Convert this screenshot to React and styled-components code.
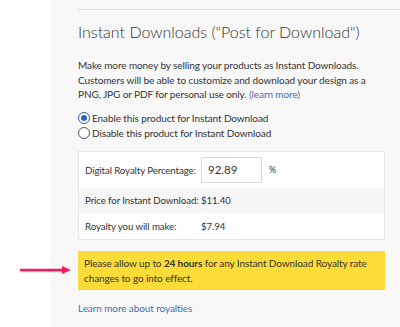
import React, { useState } from "react"
import styled, { createGlobalStyle } from "styled-components"

const GlobalStyle = createGlobalStyle`
  body {
    margin: 0;
    background: #fff;
    font-family: "Lato", "Liberation Sans", sans-serif;
    color: #333;
  }
`

const Page = styled.div`
  display: flex;
  width: 400px;
  height: 327px;
  overflow: hidden;
`

const Gutter = styled.div`
  width: 51px;
  flex: none;
  background: #fff;
`

const Panel = styled.section`
  flex: 1;
  background: #f8f8f8;
  padding: 9px 0 0 27px;
  font-size: 10px;
  letter-spacing: -0.1px;
`

const Divider = styled.hr`
  margin: 0;
  border: 0;
  border-top: 1px solid #dcdcdc;
`

const Heading = styled.h2`
  margin: 11px 0 0;
  font-size: 16px;
  font-weight: 300;
  letter-spacing: 0;
  line-height: 22px;
  color: #333;
`

const Intro = styled.p`
  margin: 15px 0 0;
  width: 290px;
  line-height: 14.5px;
  color: #333;
`

const Link = styled.a`
  color: #4a6ca8;
  text-decoration: none;
  cursor: pointer;
`

const Options = styled.div`
  margin-top: 9px;
  display: flex;
  flex-direction: column;
`

const Option = styled.label`
  display: flex;
  align-items: center;
  height: 15px;
  color: #333;
  cursor: pointer;
`

const Radio = styled.span`
  width: 10px;
  height: 10px;
  margin-right: 2px;
  border-radius: 50%;
  border: 1px solid ${p => (p.checked ? "#2d5a9e" : "#555")};
  background: #fff;
  display: flex;
  align-items: center;
  justify-content: center;

  &::after {
    content: "";
    width: 6px;
    height: 6px;
    border-radius: 50%;
    background: ${p => (p.checked ? "#2a62c0" : "transparent")};
  }
`

const Table = styled.div`
  margin-top: 10px;
  width: 305px;
  background: #fff;
  border: 1px solid #e6e6e6;
`

const Row = styled.div`
  display: grid;
  grid-template-columns: 116px auto 1fr;
  align-items: center;
  height: ${p => p.height}px;
  padding-left: 6px;
  background: ${p => (p.shaded ? "#f6f6f6" : "#fff")};
  white-space: nowrap;
  font-size: 9.7px;
  color: #333;
`

const Input = styled.input`
  box-sizing: border-box;
  width: 61px;
  height: 26px;
  border: 1px solid #d9d9d9;
  padding: 0 0 0 6px;
  font-family: inherit;
  font-size: 11.5px;
  color: #333;
  outline: none;
`

const Unit = styled.span`
  margin-left: 7px;
  font-size: 9px;
`

const Notice = styled.div`
  position: relative;
  margin-top: 11px;
  width: 295px;
  padding: 5px 6px 4px 6px;
  background: #fddc37;
  line-height: 15px;
  color: #333;

  b {
    font-weight: 700;
  }
`

const Arrow = styled.svg`
  position: absolute;
  left: -58px;
  top: 14px;
`

const Footer = styled.div`
  margin-top: 12px;
`

const App = () => {
  const [enabled, setEnabled] = useState(true)
  const [royalty, setRoyalty] = useState("92.89")

  return (
    <Page>
      <GlobalStyle />
      <Gutter />
      <Panel>
        <Divider />
        <Heading>Instant Downloads ("Post for Download")</Heading>
        <Intro>
          Make more money by selling your products as Instant Downloads.
          Customers will be able to customize and download your design as a
          PNG, JPG or PDF for personal use only. <Link>(learn more)</Link>
        </Intro>
        <Options>
          <Option onClick={() => setEnabled(true)}>
            <Radio checked={enabled} />
            Enable this product for Instant Download
          </Option>
          <Option onClick={() => setEnabled(false)}>
            <Radio checked={!enabled} />
            Disable this product for Instant Download
          </Option>
        </Options>
        <Table>
          <Row height={36}>
            <span>Digital Royalty Percentage:</span>
            <Input value={royalty} onChange={e => setRoyalty(e.target.value)} />
            <Unit>%</Unit>
          </Row>
          <Row height={25} shaded>
            <span>Price for Instant Download:</span>
            <span>$11.40</span>
          </Row>
          <Row height={26}>
            <span>Royalty you will make:</span>
            <span>$7.94</span>
          </Row>
        </Table>
        <Notice>
          <Arrow width="52" height="10" viewBox="0 0 52 10">
            <path d="M1 6.5 H43" stroke="#bbb" strokeWidth="2" opacity="0.6" />
            <path d="M1 5 H43" stroke="#ee1c5e" strokeWidth="2.6" strokeLinecap="round" />
            <path d="M42 1 L51 5 L42 9 Z" fill="#ee1c5e" />
          </Arrow>
          Please allow up to <b>24 hours</b> for any Instant Download Royalty rate
          changes to go into effect.
        </Notice>
        <Footer>
          <Link>Learn more about royalties</Link>
        </Footer>
      </Panel>
    </Page>
  )
}

export default App
